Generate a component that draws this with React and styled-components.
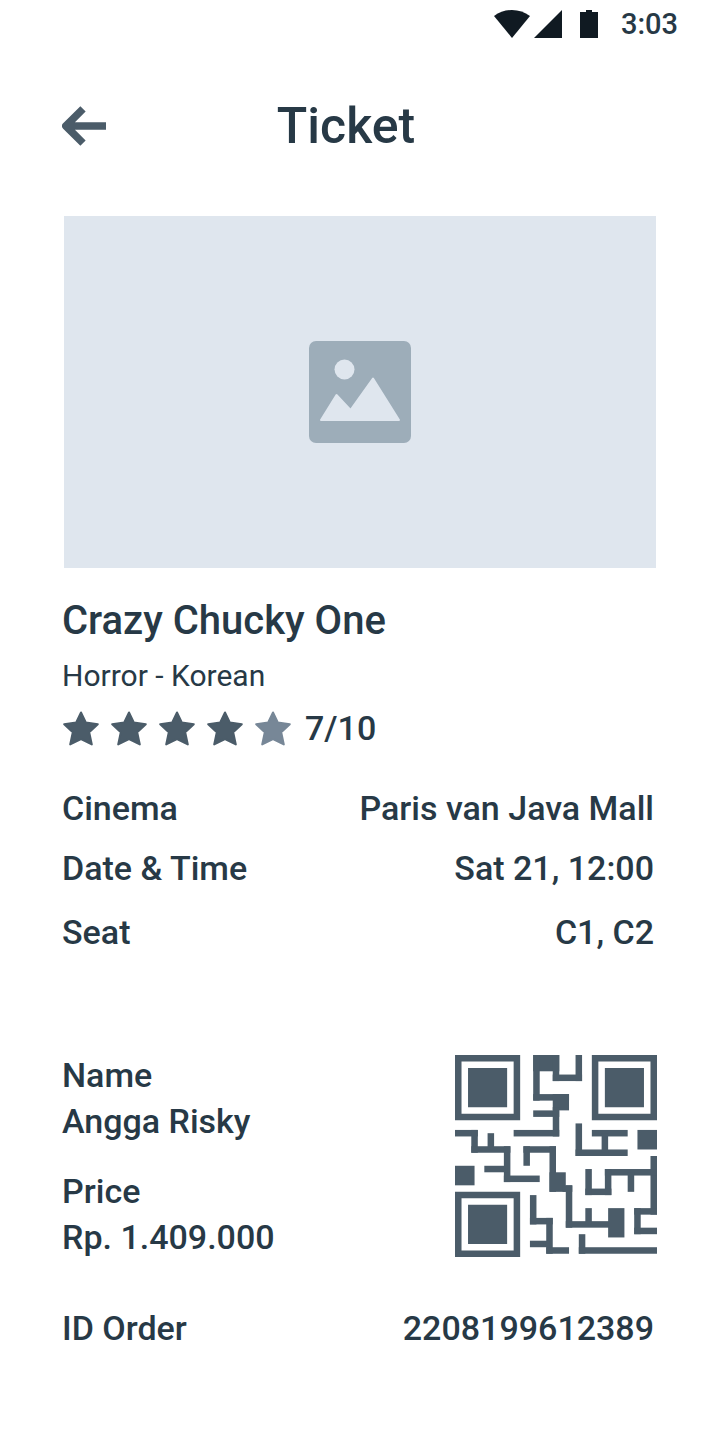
import React from "react";
import styled, { createGlobalStyle } from "styled-components";

const GlobalStyle = createGlobalStyle`
  *, *::before, *::after { box-sizing: border-box; }
  body {
    margin: 0;
    background: #ffffff;
    color: #273946;
    font-family: Roboto, "Liberation Sans", sans-serif;
    font-weight: 500;
  }
`;

const Screen = styled.div`
  display: flex;
  flex-direction: column;
  min-height: 100vh;
`;

const StatusBar = styled.div`
  display: flex;
  justify-content: flex-end;
  align-items: center;
  height: 48px;
  padding: 0 42px;
`;

const StatusIcons = styled.svg`
  width: 106px;
  height: 28px;
  margin-right: 21px;
  fill: #101a22;
`;

const Time = styled.time`
  font-size: 29px;
  line-height: 48px;
`;

const Header = styled.header`
  display: grid;
  grid-template-columns: 44px 1fr 44px;
  align-items: center;
  height: 156px;
  padding: 0 90px 0 62px;
`;

const BackButton = styled.button`
  display: block;
  padding: 0;
  border: 0;
  background: none;
  cursor: pointer;

  svg {
    display: block;
    width: 44px;
    height: 40px;
  }
`;

const PageTitle = styled.h1`
  margin: 0;
  font-size: 50px;
  font-weight: 500;
  line-height: 64px;
  text-align: center;
`;

const Main = styled.main`
  padding: 12px 64px 88px 62px;
`;

const Poster = styled.div`
  display: flex;
  align-items: center;
  justify-content: center;
  margin-left: 2px;
  aspect-ratio: 37 / 22;
  background: #dfe6ee;

  svg {
    width: 102px;
    height: 102px;
  }
`;

const MovieTitle = styled.h2`
  margin: 29px 0 11px;
  font-size: 40px;
  font-weight: 500;
  line-height: 48px;
`;

const Genre = styled.p`
  margin: 0 0 12px;
  font-size: 30px;
  font-weight: 400;
  line-height: 40px;
`;

const Rating = styled.div`
  display: flex;
  align-items: center;
  gap: 12px;
  padding-left: 1px;
  font-size: 34px;
  line-height: 40px;
`;

const Score = styled.span`
  padding-left: 2px;
`;

const StarShape = styled.svg`
  width: 36px;
  height: 36px;
  fill: ${(p) => (p.$filled ? "#4b5c69" : "#778797")};
  stroke: ${(p) => (p.$filled ? "#4b5c69" : "#778797")};
`;

const Details = styled.dl`
  margin: 36px 0 0;
`;

const Row = styled.div`
  display: flex;
  justify-content: space-between;
  margin-top: ${(p) => p.$gap || 0}px;
  padding-right: 2px;
  font-size: 34px;
  line-height: 48px;

  dd { margin: 0; }
`;

const Holder = styled.section`
  display: flex;
  justify-content: space-between;
  align-items: center;
  margin-top: 96px;
`;

const HolderInfo = styled.dl`
  display: grid;
  gap: 24px;
  margin: 0;
  font-size: 34px;
  line-height: 46px;

  dd { margin: 0; }
`;

const QrCode = styled.svg`
  width: 202px;
  height: 202px;
  margin-right: -1px;
  fill: #4b5c69;
`;

const Order = styled.dl`
  margin: 44px 0 0;
`;

function Star({ filled }) {
  return (
    <StarShape $filled={filled} viewBox="0 0 36 36" strokeWidth="2" strokeLinejoin="round" aria-hidden="true">
      <path d="M18 2.5 22.8 12.5 34.8 14.2 26.2 22.2 28.8 34.4 18 29 7.2 34.4 9.8 22.2 1.2 14.2 13.2 12.5Z" />
    </StarShape>
  );
}

/* Each entry is x, y, width, height in code modules. */
const QR_BARS = [
  [12, 0, 4, 2.5], [12, 0, 1, 7], [15, 0, 1, 4], [15, 3, 4.5, 1], [18.5, 0, 1, 4],
  [12, 6, 5.5, 1], [15, 6, 2.5, 2.5], [12, 8.5, 4, 1], [15, 8, 1, 4.5], [9, 11.5, 7, 1],
  [0, 11.5, 3.5, 1], [2.5, 11.5, 1, 3.5], [2.5, 14, 6, 1], [5, 12, 1, 2.5],
  [7.5, 14, 1, 5.5], [7.5, 18.5, 5.5, 1], [4.5, 17, 3.5, 1], [0, 17, 3, 3],
  [10.5, 14, 5, 1], [10.5, 14, 1, 3], [14.5, 14, 1, 7], [14.5, 18, 2.5, 3],
  [16.5, 20, 1.5, 1], [17, 20, 1, 6.5], [17, 25.5, 7, 1], [20, 23.5, 1, 2.5], [23.5, 23.5, 2.5, 4.5],
  [18.5, 10.5, 1, 5], [18.5, 14.5, 8, 1], [21, 11.5, 5.5, 1], [22.5, 12, 1, 3], [28, 11.5, 3, 3],
  [30, 15.5, 1, 9], [23, 17.5, 8, 1], [23, 17.5, 1, 4], [20, 20.5, 4, 1], [20, 17.5, 1, 4],
  [26.5, 18, 1, 3], [27.5, 23.5, 3.5, 1], [27.5, 23.5, 1, 4], [27.5, 26.5, 3.5, 1],
  [19, 27.5, 1, 3], [19, 29.5, 12, 1],
  [11.5, 21.5, 1, 4.5], [11.5, 25, 3.5, 1], [14, 25, 1, 5.5], [11.5, 28.5, 3, 1], [14, 29.5, 3.5, 1],
];

const QR_FINDERS = [[0, 0], [21, 0], [0, 21]];

function TicketCode() {
  return (
    <QrCode viewBox="0 0 31 31" role="img" aria-label="Ticket code">
      {QR_FINDERS.map(([x, y]) => (
        <path
          key={`${x}-${y}`}
          fillRule="evenodd"
          d={`M${x} ${y}h10v10h-10zM${x + 1} ${y + 1}v8h8v-8zM${x + 2} ${y + 2}h6v6h-6z`}
        />
      ))}
      {QR_BARS.map(([x, y, w, h], i) => (
        <rect key={i} x={x} y={y} width={w} height={h} />
      ))}
    </QrCode>
  );
}

function DetailRow({ label, value, gap }) {
  return (
    <Row $gap={gap}>
      <dt>{label}</dt>
      <dd>{value}</dd>
    </Row>
  );
}

export default function App() {
  return (
    <Screen>
      <GlobalStyle />
      <StatusBar>
        <StatusIcons viewBox="0 0 106 28" aria-hidden="true">
          <path d="M0 6Q8 0 18 0T36 6L18 28Z" />
          <path d="M68 0V28H40Z" />
          <path d="M86 2h6V0h6v2h6v26H86Z" />
        </StatusIcons>
        <Time>3:03</Time>
      </StatusBar>
      <Header>
        <BackButton type="button" aria-label="Back">
          <svg viewBox="0 0 44 40" fill="none" stroke="#4b5c69" strokeWidth="7.5">
            <path d="M44 20H6M21 2.8 3.8 20 21 37.2" strokeLinejoin="round" />
          </svg>
        </BackButton>
        <PageTitle>Ticket</PageTitle>
      </Header>
      <Main>
        <Poster role="img" aria-label="Movie poster">
          <svg viewBox="0 0 102 102">
            <rect width="102" height="102" rx="7" fill="#9dadb9" />
            <circle cx="35.5" cy="28.5" r="10" fill="#dfe6ee" />
            <path
              d="M12 79 27.5 54 41.5 69 64 37.5 90 79Z"
              fill="#dfe6ee"
              stroke="#dfe6ee"
              strokeWidth="2"
              strokeLinejoin="round"
            />
          </svg>
        </Poster>
        <MovieTitle>Crazy Chucky One</MovieTitle>
        <Genre>Horror - Korean</Genre>
        <Rating>
          <Star filled />
          <Star filled />
          <Star filled />
          <Star filled />
          <Star />
          <Score>7/10</Score>
        </Rating>
        <Details>
          <DetailRow label="Cinema" value="Paris van Java Mall" />
          <DetailRow label="Date &amp; Time" value="Sat 21, 12:00" gap={12} />
          <DetailRow label="Seat" value="C1, C2" gap={16} />
        </Details>
        <Holder>
          <HolderInfo>
            <div>
              <dt>Name</dt>
              <dd>Angga Risky</dd>
            </div>
            <div>
              <dt>Price</dt>
              <dd>Rp. 1.409.000</dd>
            </div>
          </HolderInfo>
          <TicketCode />
        </Holder>
        <Order>
          <DetailRow label="ID Order" value="2208199612389" />
        </Order>
      </Main>
    </Screen>
  );
}
